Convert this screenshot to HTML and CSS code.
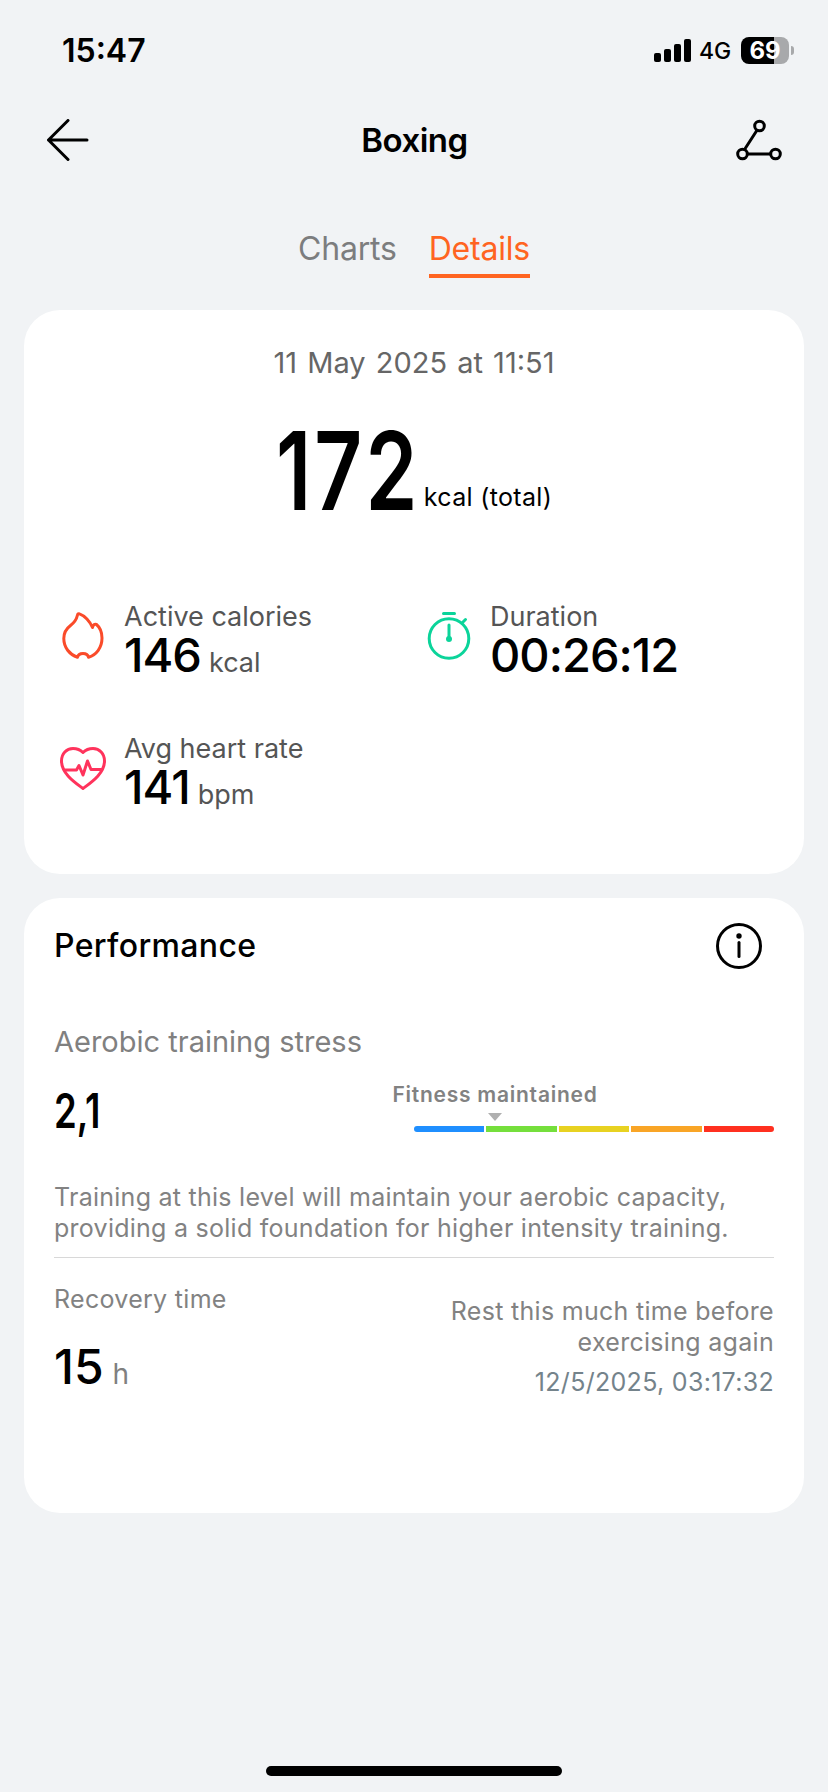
FILE: index.html
```html
<!DOCTYPE html>
<html lang="en">
<head>
  <meta charset="UTF-8" />
  <meta name="viewport" content="width=device-width, initial-scale=1.0" />
  <title>Boxing</title>
  <link rel="stylesheet" href="styles.css">
</head>
<body>

  <div class="status-bar">
    <span class="clock">15:47</span>
    <div class="status-right">
      <svg class="signal" width="37" height="23" viewBox="0 0 37 23">
        <rect x="0" y="14" width="7" height="9" rx="2" />
        <rect x="10" y="10" width="7" height="13" rx="2" />
        <rect x="20" y="5" width="7" height="18" rx="2" />
        <rect x="30" y="0" width="7" height="23" rx="2" />
      </svg>
      <span class="network">4G</span>
      <div class="battery">69</div>
      <div class="battery-cap"></div>
    </div>
  </div>

  <div class="header">
    <svg class="back" width="42" height="42" viewBox="0 0 42 42">
      <path d="M40 21H1.5M21 1.5L1.5 21L21 40.500" />
    </svg>
    <h1 class="title">Boxing</h1>
    <svg class="route" width="46" height="42" viewBox="0 0 46 42">
      <path d="M20.500 12L9.500 29M12 35H34" />
      <circle cx="23.500" cy="7" r="4.800" />
      <circle cx="6.500" cy="35" r="4.800" />
      <circle cx="39.500" cy="35" r="4.800" />
    </svg>
  </div>

  <div class="tabs">
    <div class="tab">Charts</div>
    <div class="tab active">Details</div>
  </div>

  <div class="card summary">
    <div class="date">11 May 2025 at 11:51</div>
    <div class="total">
      <div class="total-value"><span class="narrow">172</span></div>
      <span class="total-unit">kcal (total)</span>
    </div>

    <div class="stats">
      <div class="stat">
        <svg class="icon flame" width="48" height="48" viewBox="0 0 48 48">
          <path d="M20.500 1.800C25.500 3.500 31 9.500 33.500 15.500C34 13 35.500 11.800 37.500 12.500C41 15.500 43 20 43 26C43 36 37 43 29.500 45.300C28.800 42 26.500 41.500 24 41.500C21.500 41.500 19.200 42 18.500 45.300C10.500 42.500 4.800 35.500 4.800 26.500C4.800 20 7.500 16.500 11.500 13.500C15.500 10.500 17.500 7.500 18.500 3C18.800 1.800 19.500 1.400 20.500 1.800Z" />
        </svg>
        <div>
          <div class="label">Active calories</div>
          <div class="value">146<span class="unit">kcal</span></div>
        </div>
      </div>

      <div class="stat">
        <svg class="icon timer" width="48" height="48" viewBox="0 0 48 48">
          <circle cx="24" cy="26.500" r="19.800" />
          <path d="M18.500 1.500H29.500M37.500 10.500L40.500 7.500M24 13V27" />
          <circle class="dot" cx="24" cy="27" r="3" />
        </svg>
        <div>
          <div class="label">Duration</div>
          <div class="value">00:26:12</div>
        </div>
      </div>

      <div class="stat">
        <svg class="icon heart" width="48" height="48" viewBox="0 0 48 48">
          <path d="M24 44.500C16 38.500 2.500 29.500 2.500 17C2.500 9.500 7.500 4.500 14 4.500C18.500 4.500 22 6.500 24 8.500C26 6.500 29.500 4.500 34 4.500C40.500 4.500 45.500 9.500 45.500 17C45.500 29.500 32 38.500 24 44.500Z" />
          <path d="M5.500 26H17.500L20 21.500L24 31L28.500 17L32 25.500H42.500" />
        </svg>
        <div>
          <div class="label">Avg heart rate</div>
          <div class="value">141<span class="unit">bpm</span></div>
        </div>
      </div>
    </div>
  </div>

  <div class="card performance">
    <div class="card-head">
      <h2 class="card-title">Performance</h2>
      <svg class="info" width="46" height="46" viewBox="0 0 46 46">
        <circle cx="23" cy="23" r="21.500" />
        <path d="M23 19.500V33.500" />
        <circle class="dot" cx="23" cy="13" r="2.700" />
      </svg>
    </div>

    <div class="metric-name">Aerobic training stress</div>
    <div class="metric">
      <div class="metric-value"><span class="narrow">2,1</span></div>
      <div class="gauge">
        <div class="pointer">
          <span class="pointer-label">Fitness maintained</span>
          <span class="pointer-arrow"></span>
        </div>
        <div class="bar">
          <span class="blue"></span>
          <span class="green"></span>
          <span class="yellow"></span>
          <span class="orange"></span>
          <span class="red"></span>
        </div>
      </div>
    </div>

    <p class="description">Training at this level will maintain your aerobic capacity,<br>providing a solid foundation for higher intensity training.</p>

    <div class="recovery">
      <div class="recovery-left">
        <div class="recovery-name">Recovery time</div>
        <div class="recovery-value">15<span class="hours">h</span></div>
      </div>
      <div class="recovery-right">
        <div>Rest this much time before<br>exercising again</div>
        <div class="until">12/5/2025, 03:17:32</div>
      </div>
    </div>
  </div>

  <div class="home-indicator"></div>

</body>
</html>
```

FILE: styles.css
```css
* {
  margin: 0;
  padding: 0;
  box-sizing: border-box;
}

body {
  background: #f1f3f5;
  width: 828px;
  height: 1792px;
  overflow: hidden;
  display: flex;
  flex-direction: column;
  font-family: Inter, "Liberation Sans", sans-serif;
  color: #000;
  white-space: nowrap;
}

svg {
  display: block;
  flex: none;
  fill: none;
  stroke-linecap: round;
  stroke-linejoin: round;
}

/* status bar */
.status-bar {
  height: 100px;
  padding: 0 34px 0 62px;
  display: flex;
  align-items: center;
  justify-content: space-between;
}

.clock {
  font-size: 32px;
  font-weight: 600;
}

.status-right {
  display: flex;
  align-items: center;
}

.signal {
  fill: #000;
}

.network {
  width: 33px;
  margin: 1px 9px 0 8px;
  font-size: 23px;
  font-weight: 500;
}

.battery {
  width: 48px;
  height: 27px;
  border-radius: 8px;
  background: linear-gradient(to right, #000 33px, #a8a9ab 33px);
  color: #fff;
  font-size: 24px;
  font-weight: 700;
  line-height: 27px;
  text-align: center;
}

.battery-cap {
  width: 3px;
  height: 9px;
  margin-left: 2px;
  border-radius: 0 4px 4px 0;
  background: #a8a9ab;
}

/* header */
.header {
  height: 80px;
  padding: 0 46px 0 47px;
  display: flex;
  align-items: center;
  justify-content: space-between;
}

.back {
  stroke: #000;
  stroke-width: 3;
}

.title {
  margin-left: 4px;
  font-size: 33px;
  font-weight: 600;
  letter-spacing: -0.5px;
}

.route {
  stroke: #000;
  stroke-width: 3;
}

.tabs {
  padding-top: 46px;
  display: flex;
  justify-content: center;
  gap: 32px;
}

.tab {
  height: 52px;
  font-size: 32px;
  line-height: 45px;
  letter-spacing: -0.2px;
  color: #7c7d7e;
}

.tab.active {
  color: #ff6421;
  border-bottom: 4px solid #ff6421;
}

/* cards */
.card {
  margin: 0 24px;
  border-radius: 36px;
  background: #fff;
}

.summary {
  height: 564px;
  margin-top: 32px;
  padding-top: 33px;
}

.date {
  font-size: 29px;
  line-height: 40px;
  word-spacing: 2px;
  text-align: center;
  color: #666;
}

.total {
  height: 174px;
  display: flex;
  align-items: center;
  justify-content: center;
}

.narrow {
  display: inline-block;
  transform-origin: left center;
}

.total-value {
  width: 138px;
  margin-right: 10px;
  font-size: 109px;
  font-weight: 600;
  letter-spacing: 4px;
}

.total-value .narrow {
  transform: scaleX(0.765);
}

.total-unit {
  margin-top: 54px;
  font-size: 25px;
  letter-spacing: 0.33px;
}

.stats {
  padding-top: 41px;
  display: grid;
  grid-template-columns: 366px 366px;
  grid-template-rows: 132px 132px;
}

.stat {
  padding-left: 35px;
  display: flex;
  align-items: flex-start;
  gap: 17px;
}

.icon {
  margin-top: 14px;
  stroke-width: 3;
}

.flame {
  stroke: #fa4b2a;
}

.timer {
  stroke: #0bd49a;
}

.timer .dot {
  fill: #0bd49a;
  stroke: none;
}

.heart {
  stroke: #ff335c;
}

.label {
  font-size: 27px;
  line-height: 37px;
  color: #555;
}

.value {
  font-size: 47px;
  font-weight: 500;
  line-height: 39px;
  letter-spacing: -1px;
}

.unit {
  margin-left: 8px;
  font-size: 27px;
  font-weight: 400;
  letter-spacing: 0;
  color: #555;
}

/* performance */
.performance {
  height: 615px;
  margin-top: 24px;
  padding: 0 30px;
}

.card-head {
  height: 96px;
  padding-right: 12px;
  display: flex;
  align-items: center;
  justify-content: space-between;
}

.card-title {
  margin-bottom: 2px;
  font-size: 32px;
  font-weight: 500;
  letter-spacing: 0.35px;
}

.info {
  stroke: #000;
  stroke-width: 3;
}

.info .dot {
  fill: #000;
  stroke: none;
}

.metric-name {
  margin-top: 26px;
  font-size: 29px;
  line-height: 44px;
  color: #808080;
}

.metric {
  height: 118px;
  display: flex;
  justify-content: space-between;
}

.metric-value {
  font-size: 48px;
  font-weight: 600;
  line-height: 93px;
}

.metric-value .narrow {
  transform: scaleX(0.76);
}

.gauge {
  width: 360px;
  padding-top: 17px;
}

.pointer {
  width: 206px;
  margin-left: -22px;
  display: flex;
  flex-direction: column;
  align-items: center;
}

.pointer-label {
  font-size: 21px;
  font-weight: 600;
  line-height: 28px;
  letter-spacing: 0.75px;
  color: #828282;
}

.pointer-arrow {
  margin-top: 4px;
  border: 7px solid transparent;
  border-top: 8px solid #b0b0b0;
  border-bottom: 0;
}

.bar {
  height: 6px;
  margin-top: 5px;
  display: flex;
  gap: 2px;
  border-radius: 3px;
  overflow: hidden;
}

.bar span {
  flex: 1;
}

.blue { background: #1f8fff; }
.green { background: #75df3c; }
.yellow { background: #e8d221; }
.orange { background: #f9a526; }
.red { background: #ff3020; }

.description {
  font-size: 25px;
  line-height: 31px;
  letter-spacing: 0.26px;
  color: #828282;
}

.recovery {
  margin-top: 13px;
  border-top: 1px solid #d8d8d8;
  display: flex;
  justify-content: space-between;
  font-size: 25px;
  line-height: 31px;
  letter-spacing: 0.3px;
  color: #828282;
}

.recovery-left {
  padding-top: 26px;
}

.recovery-value {
  margin-top: 22px;
  font-size: 48px;
  font-weight: 500;
  line-height: 60px;
  letter-spacing: 0;
  color: #000;
}

.hours {
  margin-left: 9px;
  font-size: 28px;
  font-weight: 400;
  color: #808080;
}

.recovery-right {
  padding-top: 38px;
  text-align: right;
}

.until {
  margin-top: 9px;
  color: #74838b;
}

.home-indicator {
  width: 296px;
  height: 10px;
  margin: auto auto 16px;
  border-radius: 5px;
  background: #000;
}
```
